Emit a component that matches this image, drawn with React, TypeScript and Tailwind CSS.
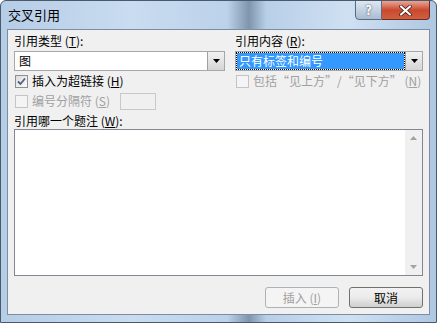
import React from "react";

const font = { fontFamily: '"SimSun", "Noto Sans CJK SC", sans-serif' };

function Check({ checked, disabled }: { checked?: boolean; disabled?: boolean }) {
  return (
    <span
      className={`relative inline-block w-[13px] h-[13px] border ${
        disabled ? "border-[#c4c4c4] bg-[#f4f4f4]" : "border-[#8e8f8f] bg-gradient-to-br from-[#dcdcdc] to-[#fbfbfb]"
      }`}
    >
      {checked && (
        <svg className="absolute left-[1px] top-[1px]" width="9" height="9" viewBox="0 0 9 9">
          <path d="M1 4.5 L3.5 7 L8 1.5" fill="none" stroke="#4d6185" strokeWidth="1.8" />
        </svg>
      )}
    </span>
  );
}

function DropButton() {
  return (
    <span className="flex items-center justify-center w-[17px] h-full border-l border-[#a0a0a0] bg-gradient-to-b from-[#f2f2f2] to-[#d5d5d5]">
      <svg width="7" height="4" viewBox="0 0 7 4">
        <path d="M0 0 H7 L3.5 4 Z" fill="#000" />
      </svg>
    </span>
  );
}

export default function App() {
  return (
    <div
      className="w-[437px] h-[323px] overflow-hidden rounded-t-[6px] border border-[#4a5a6e] flex flex-col text-[12px] text-black"
      style={{
        ...font,
        background:
          "linear-gradient(to right, #b6cde6 0%, #c9dcf0 30%, #bcd2ea 52%, #7f95ae 57%, #b8cfe8 61%, #cfe0f2 80%, #aec7e2 100%)",
      }}
    >
      {/* title bar */}
      <div className="h-[28px] flex items-start justify-between pl-[7px]">
        <span className="mt-[7px] text-[13px] leading-[14px]">交叉引用</span>
        <div className="flex mr-[6px] -mt-px">
          <span className="w-[27px] h-[20px] flex items-center justify-center border border-[#5a6a80] rounded-bl-[4px] bg-gradient-to-b from-[#dfe8f2] to-[#a9bcd2] text-white font-bold text-[13px] [text-shadow:0_0_2px_#333]">
            ?
          </span>
          <span className="w-[48px] h-[20px] flex items-center justify-center border border-l-0 border-[#6b2a22] rounded-br-[4px] bg-gradient-to-b from-[#e8a595] via-[#c9482f] to-[#d0603f]">
            <svg width="13" height="11" viewBox="0 0 13 11">
              <path d="M2 1.5 L11 9.5 M11 1.5 L2 9.5" stroke="#3a1410" strokeWidth="3.6" strokeLinecap="round" />
              <path d="M2 1.5 L11 9.5 M11 1.5 L2 9.5" stroke="#fff" strokeWidth="2.2" strokeLinecap="round" />
            </svg>
          </span>
        </div>
      </div>

      {/* client area */}
      <div className="mx-[6px] mb-[7px] flex-1 border border-[#7d8ca0] bg-[#f0f0f0] pl-[6px] pr-[6px] pt-[3px] flex flex-col">
        <div className="grid grid-cols-[211px_188px] gap-x-[10px]">
          <div className="flex flex-col">
            <span className="h-[16px] leading-[16px]">引用类型 (<u>T</u>):</span>
            <div className="mt-[2px] h-[20px] flex border border-[#a7a7a7] bg-white">
              <span className="flex-1 pl-[4px] leading-[18px]">图</span>
              <DropButton />
            </div>
            <div className="mt-[2px] h-[16px] flex items-center gap-[4px] pl-[1px]">
              <Check checked />
              <span className="leading-[16px]">插入为超链接 (<u>H</u>)</span>
            </div>
            <div className="mt-[3px] h-[18px] flex items-center pl-[1px]">
              <Check disabled />
              <span className="ml-[4px] leading-[16px] text-[#a0a0a0]">编号分隔符 (<u>S</u>)</span>
              <span className="ml-[10px] w-[36px] h-[17px] border border-[#c8c8c8] bg-[#f0f0f0]" />
            </div>
          </div>
          <div className="flex flex-col">
            <span className="h-[16px] leading-[16px]">引用内容 (<u>R</u>):</span>
            <div className="mt-[2px] h-[20px] flex border border-[#a7a7a7] bg-white">
              <span className="flex-1 p-[1px]">
                <span className="block h-full bg-[#3399ff] text-white leading-[16px] pl-[2px] outline-1 outline-dotted outline-[#000]">
                  只有标签和编号
                </span>
              </span>
              <DropButton />
            </div>
            <div className="mt-[2px] h-[16px] flex items-center gap-[4px] pl-[1px]">
              <Check disabled />
              <span className="leading-[16px] text-[#a0a0a0]">包括“见上方”/“见下方” (<u>N</u>)</span>
            </div>
          </div>
        </div>

        <span className="mt-[3px] h-[16px] leading-[16px]">引用哪一个题注 (<u>W</u>):</span>
        <div className="h-[147px] flex border border-[#828790] bg-white">
          <div className="flex-1" />
          <div className="w-[17px] bg-[#f0f0f0] flex flex-col justify-between items-center py-[6px]">
            <svg width="7" height="4" viewBox="0 0 7 4">
              <path d="M0 4 H7 L3.5 0 Z" fill="#a3a3a3" />
            </svg>
            <svg width="7" height="4" viewBox="0 0 7 4">
              <path d="M0 0 H7 L3.5 4 Z" fill="#a3a3a3" />
            </svg>
          </div>
        </div>

        <div className="mt-[11px] flex justify-end gap-[10px]">
          <span className="w-[74px] h-[21px] flex items-center justify-center border border-[#adb2b5] rounded-[3px] bg-[#f4f4f4] text-[#a0a0a0]">
            插入 (<u>I</u>)
          </span>
          <span className="w-[74px] h-[21px] flex items-center justify-center border border-[#707070] rounded-[3px] bg-gradient-to-b from-[#f2f2f2] via-[#ebebeb] to-[#cfcfcf]">
            取消
          </span>
        </div>
      </div>
    </div>
  );
}
